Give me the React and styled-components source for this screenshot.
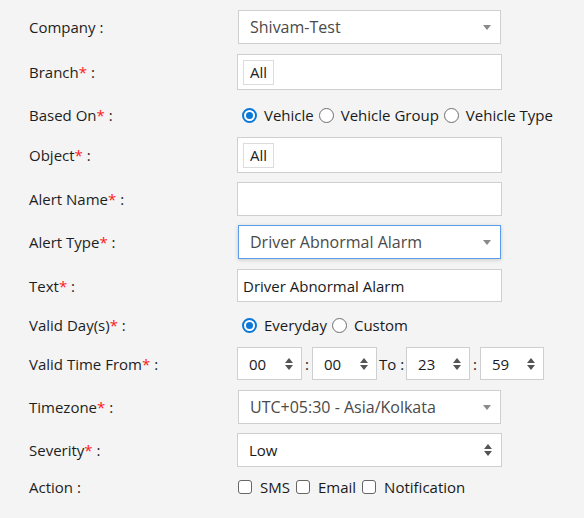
import React from "react";
import styled, { createGlobalStyle } from "styled-components";

const GlobalStyle = createGlobalStyle`
  html, body {
    margin: 0;
    padding: 0;
    background: #f4f4f4;
  }
  body {
    font-family: "Open Sans", "Noto Sans", sans-serif;
    font-size: 15px;
    color: #222;
  }
`;

const Form = styled.div`
  display: flex;
  flex-direction: column;
  padding: 10px 0 0 29px;
  width: 584px;
  height: 518px;
  box-sizing: border-box;
`;

const Row = styled.div`
  display: flex;
  align-items: center;
  height: ${props => props.$h || 34}px;
  margin-bottom: ${props => props.$mb ?? 9}px;
`;

const Label = styled.div`
  width: 208px;
  flex-shrink: 0;
  font-size: 15px;
  color: #1e1e1e;
`;

const Star = styled.span`
  color: #ff1a1a;
`;

const Box = styled.div`
  position: relative;
  box-sizing: border-box;
  display: flex;
  align-items: center;
  width: ${props => props.$w || 265}px;
  height: 100%;
  margin-left: ${props => props.$ml || 0}px;
  background: #fff;
  border: 1px solid ${props => (props.$focus ? "#5c9cec" : "#cfcfcf")};
  box-shadow: ${props =>
    props.$focus ? "0 1px 4px rgba(0, 0, 0, 0.18)" : "none"};
  padding: 0 ${props => props.$px ?? 11}px;
  font-size: ${props => props.$fs || 15}px;
  color: ${props => (props.$muted ? "#4a4a4a" : "#1a1a1a")};
`;

const Arrow = styled.span`
  position: absolute;
  right: 9px;
  top: 50%;
  margin-top: -2px;
  width: 0;
  height: 0;
  border-left: 4px solid transparent;
  border-right: 4px solid transparent;
  border-top: 5px solid #8a8a8a;
`;

const Spinner = styled.span`
  position: absolute;
  right: ${props => props.$r || 8}px;
  top: 50%;
  transform: translateY(-50%);
  display: flex;
  flex-direction: column;
  gap: 2px;

  &::before,
  &::after {
    content: "";
    width: 0;
    height: 0;
    border-left: 4px solid transparent;
    border-right: 4px solid transparent;
  }
  &::before {
    border-bottom: 5px solid #555;
  }
  &::after {
    border-top: 5px solid #555;
  }
`;

const Tag = styled.span`
  box-sizing: border-box;
  display: inline-flex;
  align-items: center;
  height: 25px;
  padding: 0 6px;
  border: 1px solid #dcdcdc;
  background: #fff;
  font-size: 15px;
  color: #222;
`;

const Options = styled.div`
  display: flex;
  align-items: center;
  gap: ${props => props.$gap || 5}px;
  font-size: 15px;
  color: #1a1a1a;
`;

const Option = styled.label`
  display: inline-flex;
  align-items: center;
  gap: ${props => props.$gap || 7}px;
`;

const Radio = styled.span`
  box-sizing: border-box;
  width: 15px;
  height: 15px;
  border-radius: 50%;
  border: ${props => (props.$on ? "2px solid #0b78d7" : "1px solid #6e6e6e")};
  background: #fff;
  display: inline-flex;
  align-items: center;
  justify-content: center;
  margin-left: ${props => props.$ml || 0}px;

  &::after {
    content: "";
    display: ${props => (props.$on ? "block" : "none")};
    width: 7px;
    height: 7px;
    border-radius: 50%;
    background: #0b78d7;
  }
`;

const Check = styled.span`
  box-sizing: border-box;
  width: 14px;
  height: 14px;
  border: 1px solid #666;
  border-radius: 3px;
  background: #fff;
  margin-left: ${props => props.$ml || 0}px;
`;

const TimeGroup = styled.div`
  display: flex;
  align-items: center;
  height: 100%;
  font-size: 15px;
`;

const Sep = styled.span`
  padding: 0 ${props => props.$p || 3}px;
  color: #1a1a1a;
`;

const TimeBox = ({ value, w }) => (
  <Box $w={w} $px={11}>
    {value}
    <Spinner />
  </Box>
);

const Select = ({ value, focus }) => (
  <Box $w={263} $ml={1} $muted $focus={focus} $fs={16}>
    {value}
    <Arrow />
  </Box>
);

const Req = ({ children }) => (
  <Label>
    {children}
    <Star>*</Star> :
  </Label>
);

const App = () => (
  <>
    <GlobalStyle />
    <Form>
      <Row $mb={10}>
        <Label>Company :</Label>
        <Select value="Shivam-Test" />
      </Row>
      <Row $h={36} $mb={11}>
        <Req>Branch</Req>
        <Box $px={5}>
          <Tag>All</Tag>
        </Box>
      </Row>
      <Row $h={28} $mb={8}>
        <Req>Based On</Req>
        <Options>
          <Option>
            <Radio $on $ml={5} />
            Vehicle
          </Option>
          <Option>
            <Radio />
            Vehicle Group
          </Option>
          <Option>
            <Radio />
            Vehicle Type
          </Option>
        </Options>
      </Row>
      <Row $h={36}>
        <Req>Object</Req>
        <Box $px={5}>
          <Tag>All</Tag>
        </Box>
      </Row>
      <Row>
        <Req>Alert Name</Req>
        <Box />
      </Row>
      <Row $mb={10}>
        <Req>Alert Type</Req>
        <Select value="Driver Abnormal Alarm" focus />
      </Row>
      <Row $h={33} $mb={9}>
        <Req>Text</Req>
        <Box $px={5}>Driver Abnormal Alarm</Box>
      </Row>
      <Row $h={28} $mb={8}>
        <Req>Valid Day(s)</Req>
        <Options>
          <Option>
            <Radio $on $ml={5} />
            Everyday
          </Option>
          <Option>
            <Radio />
            Custom
          </Option>
        </Options>
      </Row>
      <Row $h={33} $mb={10}>
        <Req>Valid Time From</Req>
        <TimeGroup>
          <TimeBox value="00" w={65} />
          <Sep>:</Sep>
          <TimeBox value="00" w={65} />
          <Sep $p={2}>To :</Sep>
          <TimeBox value="23" w={64} />
          <Sep>:</Sep>
          <TimeBox value="59" w={64} />
        </TimeGroup>
      </Row>
      <Row>
        <Req>Timezone</Req>
        <Select value="UTC+05:30 - Asia/Kolkata" />
      </Row>
      <Row $mb={9}>
        <Req>Severity</Req>
        <Box>
          Low
          <Spinner $r={9} />
        </Box>
      </Row>
      <Row $h={22}>
        <Label>Action :</Label>
        <Options $gap={6}>
          <Option $gap={8}>
            <Check $ml={1} />
            SMS
          </Option>
          <Option $gap={8}>
            <Check />
            Email
          </Option>
          <Option $gap={8}>
            <Check />
            Notification
          </Option>
        </Options>
      </Row>
    </Form>
  </>
);

export default App;
